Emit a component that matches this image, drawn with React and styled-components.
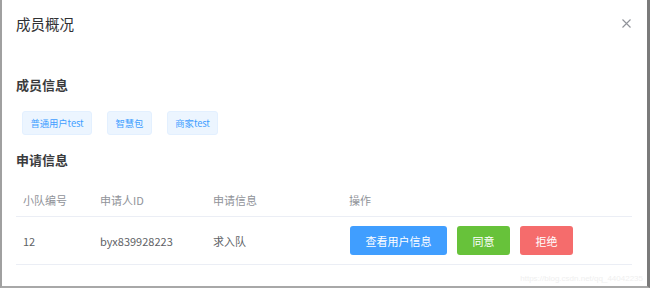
import styled, { createGlobalStyle } from "styled-components";

const GlobalStyle = createGlobalStyle`
  body {
    margin: 0;
    background: #fff;
    font-family: "Noto Sans CJK SC", "Noto Sans", sans-serif;
  }
`;

const Frame = styled.div`
  position: relative;
  width: 650px;
  height: 288px;
  box-sizing: border-box;
  border-left: 2px solid #a0a0a0;
  border-right: 3px solid #7a7a7a;
  border-bottom: 2px solid #a8a8a8;
  background: #fff;
  overflow: hidden;
`;

const Header = styled.header`
  display: flex;
  justify-content: space-between;
  align-items: flex-start;
  padding: 14px 15px 0 14px;
`;

const Title = styled.h2`
  margin: 0;
  font-size: 14.5px;
  line-height: 20px;
  font-weight: 400;
  color: #303133;
`;

const Close = styled.button`
  margin-top: 3px;
  padding: 0;
  border: none;
  background: none;
  width: 12px;
  height: 12px;
  display: flex;
  align-items: center;
  justify-content: center;
  color: #909399;
`;

const Body = styled.div`
  padding: 0 15px 0 14px;
`;

const SectionTitle = styled.h3`
  margin: ${(p) => p.$top}px 0 0;
  font-size: 13px;
  line-height: 18px;
  font-weight: 700;
  color: #3a3b3d;
`;

const TagRow = styled.div`
  display: flex;
  gap: 15px;
  margin-top: 17px;
  padding-left: 6px;
`;

const Tag = styled.span`
  display: inline-flex;
  align-items: center;
  height: 24px;
  box-sizing: border-box;
  padding: 0 7.5px;
  border: 1px solid #e3f0ff;
  border-radius: 3px;
  background: #ecf5ff;
  color: #409eff;
  font-size: 9.4px;
  letter-spacing: -0.1px;
`;

const Table = styled.div`
  margin-top: 15px;
`;

const Row = styled.div`
  display: grid;
  grid-template-columns: 76px 113px 136px 1fr;
  align-items: center;
  height: ${(p) => p.$height}px;
  border-bottom: 1px solid #ebeef5;
  color: ${(p) => (p.$head ? "#909399" : "#606266")};
  font-size: 11px;
`;

const Cell = styled.div`
  padding-left: ${(p) => p.$pad || 7}px;
  display: flex;
  align-items: center;
  gap: 10px;
`;

const Button = styled.button`
  height: 29px;
  padding: 0 15.5px;
  border: none;
  border-radius: 3px;
  background: ${(p) => p.$bg};
  color: #fff;
  font-family: inherit;
  font-size: 11px;
`;

const Watermark = styled.span`
  position: absolute;
  right: 4px;
  bottom: 3px;
  font-family: "Liberation Sans", sans-serif;
  font-size: 8px;
  color: #efefef;
`;

export default function App() {
  return (
    <Frame>
      <GlobalStyle />
      <Header>
        <Title>成员概况</Title>
        <Close aria-label="close">
          <svg width="9" height="9" viewBox="0 0 9 9">
            <path d="M0.5 0.5L8.5 8.5M8.5 0.5L0.5 8.5" stroke="currentColor" strokeWidth="1.1" />
          </svg>
        </Close>
      </Header>
      <Body>
        <SectionTitle $top={42}>成员信息</SectionTitle>
        <TagRow>
          <Tag>普通用户test</Tag>
          <Tag>智慧包</Tag>
          <Tag>商家test</Tag>
        </TagRow>
        <SectionTitle $top={16}>申请信息</SectionTitle>
        <Table>
          <Row $head $height={32}>
            <Cell>小队编号</Cell>
            <Cell $pad={8}>申请人ID</Cell>
            <Cell $pad={8}>申请信息</Cell>
            <Cell $pad={8}>操作</Cell>
          </Row>
          <Row $height={47}>
            <Cell>12</Cell>
            <Cell $pad={8}>byx839928223</Cell>
            <Cell $pad={8}>求入队</Cell>
            <Cell $pad={9}>
              <Button $bg="#409eff">查看用户信息</Button>
              <Button $bg="#67c23a">同意</Button>
              <Button $bg="#f56c6c">拒绝</Button>
            </Cell>
          </Row>
        </Table>
      </Body>
      <Watermark>https://blog.csdn.net/qq_44042235</Watermark>
    </Frame>
  );
}
